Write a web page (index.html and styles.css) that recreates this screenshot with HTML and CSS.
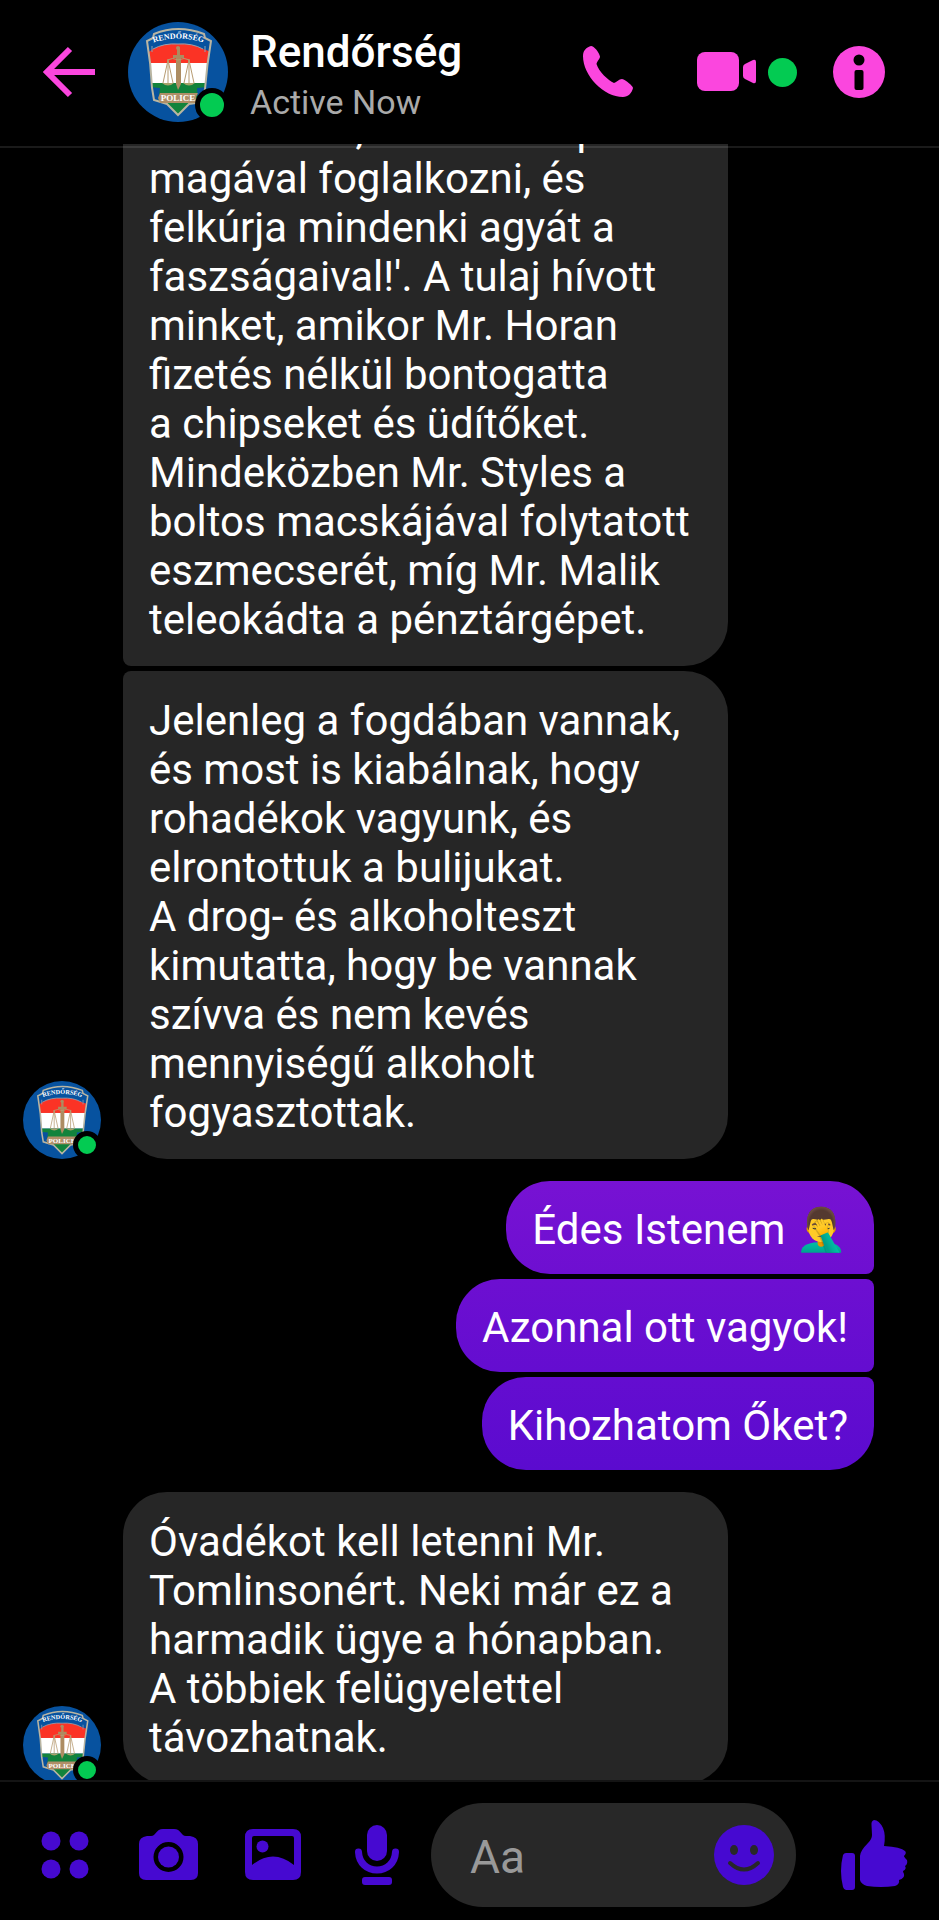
FILE: index.html
```html
<!DOCTYPE html>
<html lang="hu">
<head>
<meta charset="utf-8">
<meta name="viewport" content="width=device-width, initial-scale=1">
<title>Rendőrség</title>
<link rel="stylesheet" href="styles.css">
</head>
<body>
<svg class="sprite" aria-hidden="true">
  <defs>
    <path id="badge-arc" d="M22 22Q50 11 79 22"/>
    <clipPath id="shield-clip"><path d="M26 12Q50 2 76 12L77 16L83 19Q79 42 77 67L74 80L61 82L50 93L39 82L26 78L24 66Q23 42 19 19L25 16Z"/></clipPath>
  </defs>
  <symbol id="police" viewBox="0 0 100 100">
    <circle cx="50" cy="50" r="50" fill="#07529f"/>
    <g clip-path="url(#shield-clip)">
      <rect x="15" y="0" width="70" height="41" fill="#fb3325"/>
      <rect x="15" y="41" width="70" height="20" fill="#fff"/>
      <rect x="15" y="61" width="70" height="34" fill="#12833c"/>
      <path d="M18 0H84V30L75 27Q64 21 50 22Q36 21 25 27L18 32Z" fill="#07529f"/>
      <path d="M22 65L32 66L30 82H22ZM80 65L69 66L70 82H80Z" fill="#07529f"/>
    </g>
    <path d="M26 12Q50 2 76 12L77 16L83 19Q79 42 77 67L74 80L61 82L50 93L39 82L26 78L24 66Q23 42 19 19L25 16Z" fill="none" stroke="#b9b5a2" stroke-width="2"/>
    <path d="M25 27Q36 21 50 22Q64 21 75 27M24 30V24M77 30V24" fill="none" stroke="#8ea4b5" stroke-width="1"/>
    <path d="M48 34H53V62L50 68L48 62ZM45 33H56V36H45ZM49 25H52V34H49Z" fill="#ad8c61"/>
    <circle cx="50" cy="26" r="2" fill="#ad8c61"/>
    <path d="M39 38Q45 35 50 38Q56 35 62 38M40 38L35 61M40 38L45 61M40 38V61M61 38L56 61M61 38L66 61M61 38V61" fill="none" stroke="#b79c72" stroke-width="1"/>
    <path d="M34 61H46Q40 66 34 61ZM55 61H67Q61 66 55 61Z" fill="#a9a26a"/>
    <path d="M32 71H70L68 75L70 81H32L30 76Z" fill="#b08f68"/>
    <text x="50" y="79" class="crest-label">POLICE</text>
    <text class="crest-title"><textPath href="#badge-arc" startOffset="50%">RENDŐRSÉG</textPath></text>
  </symbol>
</svg>

<div class="app">
  <header class="topbar">
    <button class="icon-btn back" aria-label="Back">
      <svg width="52" height="52" viewBox="0 0 52 52"><path d="M27 3L4 26L27 49M4 26H52" fill="none" stroke="currentColor" stroke-width="6"/></svg>
    </button>
    <div class="avatar avatar-large">
      <svg role="img" aria-label="Rendőrség"><use href="#police"/></svg>
      <span class="status"></span>
    </div>
    <div class="contact">
      <h1 class="contact-name">Rendőrség</h1>
      <p class="contact-state">Active Now</p>
    </div>
    <div class="actions">
      <button class="icon-btn" aria-label="Call">
        <svg width="50" height="52" viewBox="0 0 50 52"><path d="M8 0C4 1 0 4 0 10C0 30 21 51 40 51C45 51 49 47 50 42C50 40 43 34 39 33C36 33 34 36 31 37C25 34 16 26 13.500 18C14 15 17 13 17 10.500C16 6 11 0 8 0Z" fill="currentColor"/></svg>
      </button>
      <button class="icon-btn video" aria-label="Video call">
        <svg width="60" height="40" viewBox="0 0 60 40"><rect width="42" height="39" rx="8" fill="currentColor"/><path d="M48 12L56 8Q59 7 59 10V29Q59 32 56 31L48 27Q46 26 46 24V15Q46 13 48 12Z" fill="currentColor"/></svg>
        <span class="video-status"></span>
      </button>
      <button class="icon-btn" aria-label="Info">
        <svg width="52" height="52" viewBox="0 0 52 52"><circle cx="26" cy="26" r="26" fill="currentColor"/><circle cx="26" cy="14" r="5.500" fill="#000"/><rect x="21.500" y="24" width="9" height="20" rx="2" fill="#000"/></svg>
      </button>
    </div>
  </header>

  <main class="chat">
    <div class="row">
      <div class="thread">
        <p class="bubble in first">mert itthon, mint aki képes magával foglalkozni, és felkúrja mindenki agyát a faszságaival!'. A tulaj hívott minket, amikor Mr. Horan fizetés nélkül bontogatta a&nbsp;chipseket és üdítőket. Mindeközben Mr. Styles a boltos macskájával folytatott eszmecserét, míg Mr. Malik teleokádta a pénztárgépet.</p>
        <p class="bubble in last">Jelenleg a fogdában vannak, és most is kiabálnak, hogy rohadékok vagyunk, és elrontottuk a bulijukat.<br>A drog- és alkoholteszt kimutatta, hogy be vannak szívva és nem kevés mennyiségű alkoholt fogyasztottak.</p>
      </div>
      <div class="avatar avatar-small">
        <svg role="img" aria-label="Rendőrség"><use href="#police"/></svg>
        <span class="status"></span>
      </div>
    </div>

    <div class="thread own">
      <p class="bubble out tone-1">Édes Istenem 🤦‍♂️</p>
      <p class="bubble out tone-2">Azonnal ott vagyok!</p>
      <p class="bubble out tone-3">Kihozhatom Őket?</p>
    </div>

    <div class="row">
      <div class="thread">
        <p class="bubble in">Óvadékot kell letenni Mr. Tomlinsonért. Neki már ez a harmadik ügye a hónapban.<br>A többiek felügyelettel távozhatnak.</p>
      </div>
      <div class="avatar avatar-small">
        <svg role="img" aria-label="Rendőrség"><use href="#police"/></svg>
        <span class="status"></span>
      </div>
    </div>
  </main>

  <footer class="composer">
    <div class="tools">
      <button class="icon-btn tool" aria-label="More">
        <svg width="48" height="48" viewBox="0 0 48 48" fill="currentColor"><circle cx="10" cy="10" r="9.500"/><circle cx="38" cy="10" r="9.500"/><circle cx="10" cy="38" r="9.500"/><circle cx="38" cy="38" r="9.500"/></svg>
      </button>
      <button class="icon-btn tool" aria-label="Camera">
        <svg width="60" height="52" viewBox="0 0 60 52"><path d="M8 7H12C17 7 17 0 24 0H35C42 0 42 7 47 7H51Q59 8 59 15V44Q59 51 52 51H7Q0 51 0 44V15Q0 8 8 7ZM29.500 13A15 15 0 1 0 29.500 43A15 15 0 1 0 29.500 13Z" fill="currentColor" fill-rule="evenodd"/><circle cx="29.500" cy="28" r="10.500" fill="currentColor"/></svg>
      </button>
      <button class="icon-btn tool" aria-label="Gallery">
        <svg width="56" height="52" viewBox="0 0 56 52"><path d="M8 0H48Q56 0 56 8V43Q56 51 48 51H8Q0 51 0 43V8Q0 0 8 0ZM9 7Q7 7 7 9V36Q28 19 49 36V9Q49 7 47 7Z" fill="currentColor" fill-rule="evenodd"/><circle cx="17.500" cy="17.500" r="6" fill="currentColor"/></svg>
      </button>
      <button class="icon-btn tool" aria-label="Voice message">
        <svg width="44" height="60" viewBox="0 0 44 60"><rect x="12" y="0" width="20" height="36" rx="10" fill="currentColor"/><path d="M3.500 27C4 38 12 45 22 45S40 38 40.500 27" fill="none" stroke="currentColor" stroke-width="7" stroke-linecap="round"/><rect x="7" y="52" width="30" height="8" rx="3" fill="currentColor"/></svg>
      </button>
    </div>
    <div class="field">
      <input class="field-input" type="text" placeholder="Aa" aria-label="Message">
      <button class="icon-btn" aria-label="Emoji">
        <svg width="60" height="60" viewBox="0 0 60 60"><circle cx="30" cy="30" r="30" fill="currentColor"/><ellipse cx="20" cy="25" rx="4" ry="5" fill="#282828"/><ellipse cx="40" cy="25" rx="4" ry="5" fill="#282828"/><path d="M16 38Q30 51 44 38" fill="none" stroke="#282828" stroke-width="4" stroke-linecap="round"/></svg>
      </button>
    </div>
    <button class="icon-btn" aria-label="Like">
      <svg width="68" height="70" viewBox="0 0 68 70" fill="currentColor"><path d="M6 33H12Q15 33 15 36V67Q15 70 12 70H6Q4 70 3 67Q-1 51 3 35Q4 33 6 33Z"/><path d="M34 0Q31 1 31.500 5L32 15Q32 19 28 23Q20 31 20 36V60Q21 64 27 66Q41 68 55 66Q60 64 59 60Q65 58 64 54Q63 52 63 51Q67 49 65 46Q68 44 67 40Q64 37 64 36Q67 33 65 31Q61 27 44 26Q46 15 43 8Q39 0 34 0Z"/></svg>
    </button>
  </footer>
</div>
</body>
</html>
```
FILE: styles.css
```css
* { box-sizing: border-box; }

body {
  margin: 0;
  background: #000;
  color: #fff;
  font-family: Roboto, "Liberation Sans", "Noto Color Emoji", sans-serif;
}

h1, p { margin: 0; }

.sprite { position: absolute; width: 0; height: 0; }

.app {
  display: flex;
  flex-direction: column;
  height: 100vh;
}

.icon-btn {
  display: flex;
  align-items: center;
  justify-content: center;
  padding: 0;
  border: 0;
  background: none;
  color: inherit;
}

/* Header */
.topbar {
  display: flex;
  align-items: center;
  flex: none;
  height: 144px;
  padding: 0 54px 0 43px;
}

.back, .actions { color: #fb46de; }
.back { margin-right: 33px; }

.avatar { position: relative; flex: none; }
.avatar svg { display: block; width: 100%; height: 100%; }
.avatar-large { width: 100px; height: 100px; }
.avatar-small { width: 78px; height: 78px; }

.status {
  position: absolute;
  right: -1px;
  bottom: 0;
  width: 34px;
  height: 34px;
  border: 5px solid #000;
  border-radius: 50%;
  background: #03cb52;
}

.avatar-small .status {
  right: 0;
  width: 28px;
  height: 28px;
}

.crest-label, .crest-title {
  font-family: "Liberation Serif", serif;
  font-weight: 700;
  text-anchor: middle;
  fill: #fff;
}
.crest-label { font-size: 9px; }
.crest-title { font-size: 8px; }

.contact { flex: 1; margin-left: 22px; padding-top: 10px; }
.contact-name { font-size: 44px; line-height: 50px; font-weight: 500; }
.contact-state { font-size: 34px; line-height: 50px; color: #aaa; }

.actions { display: flex; align-items: center; }
.video { gap: 11px; margin: 0 36px 0 64px; }
.video-status {
  width: 29px;
  height: 29px;
  border-radius: 50%;
  background: #03cb52;
}

/* Conversation */
.chat {
  position: relative;
  display: flex;
  flex: 1;
  flex-direction: column;
  justify-content: flex-end;
  gap: 22px;
  min-height: 0;
  padding-left: 23px;
  overflow: hidden;
}

.chat > * { flex: none; }
.chat > :last-child { margin-bottom: -4px; }

.chat::before {
  content: "";
  position: absolute;
  top: 2px;
  left: 0;
  right: 0;
  height: 2px;
  background: rgba(255, 255, 255, 0.1);
}

.row {
  display: flex;
  flex-direction: row-reverse;
  align-items: flex-end;
  justify-content: flex-end;
  gap: 22px;
}

.thread {
  display: flex;
  flex-direction: column;
  align-items: flex-start;
  gap: 5px;
}

.thread.own {
  align-items: flex-end;
  padding-right: 65px;
}

.bubble {
  max-width: 605px;
  padding: 25px 26px 22px;
  border-radius: 44px;
  background: #262626;
  font-size: 42px;
  line-height: 49px;
}

.in.first { border-bottom-left-radius: 8px; }
.in.last { border-top-left-radius: 8px; }

.out { padding: 24px 26px 20px; }
.tone-1 {
  border-bottom-right-radius: 8px;
  background: linear-gradient(#7712d3, #6e0fd1);
}
.tone-2 {
  border-top-right-radius: 8px;
  border-bottom-right-radius: 8px;
  background: linear-gradient(#6d0fd1, #640dd0);
}
.tone-3 {
  border-top-right-radius: 8px;
  background: linear-gradient(#640dd0, #5b0bcf);
}

/* Composer */
.composer {
  display: flex;
  align-items: center;
  flex: none;
  height: 140px;
  padding: 8px 31px 0 35px;
  border-top: 2px solid #141414;
  color: #4609d1;
}

.tools { display: flex; align-items: center; gap: 44px; }
.tool { width: 60px; }

.field {
  display: flex;
  align-items: center;
  flex: 1;
  min-width: 0;
  height: 104px;
  margin: 0 44px 0 24px;
  padding: 0 22px 0 39px;
  border-radius: 52px;
  background: #282828;
}

.field-input {
  flex: 1;
  min-width: 0;
  padding: 3px 0 0;
  border: 0;
  outline: 0;
  background: none;
  color: #fff;
  font-family: inherit;
  font-size: 46px;
  line-height: 56px;
}
.field-input::placeholder { color: #999; opacity: 1; }
```
